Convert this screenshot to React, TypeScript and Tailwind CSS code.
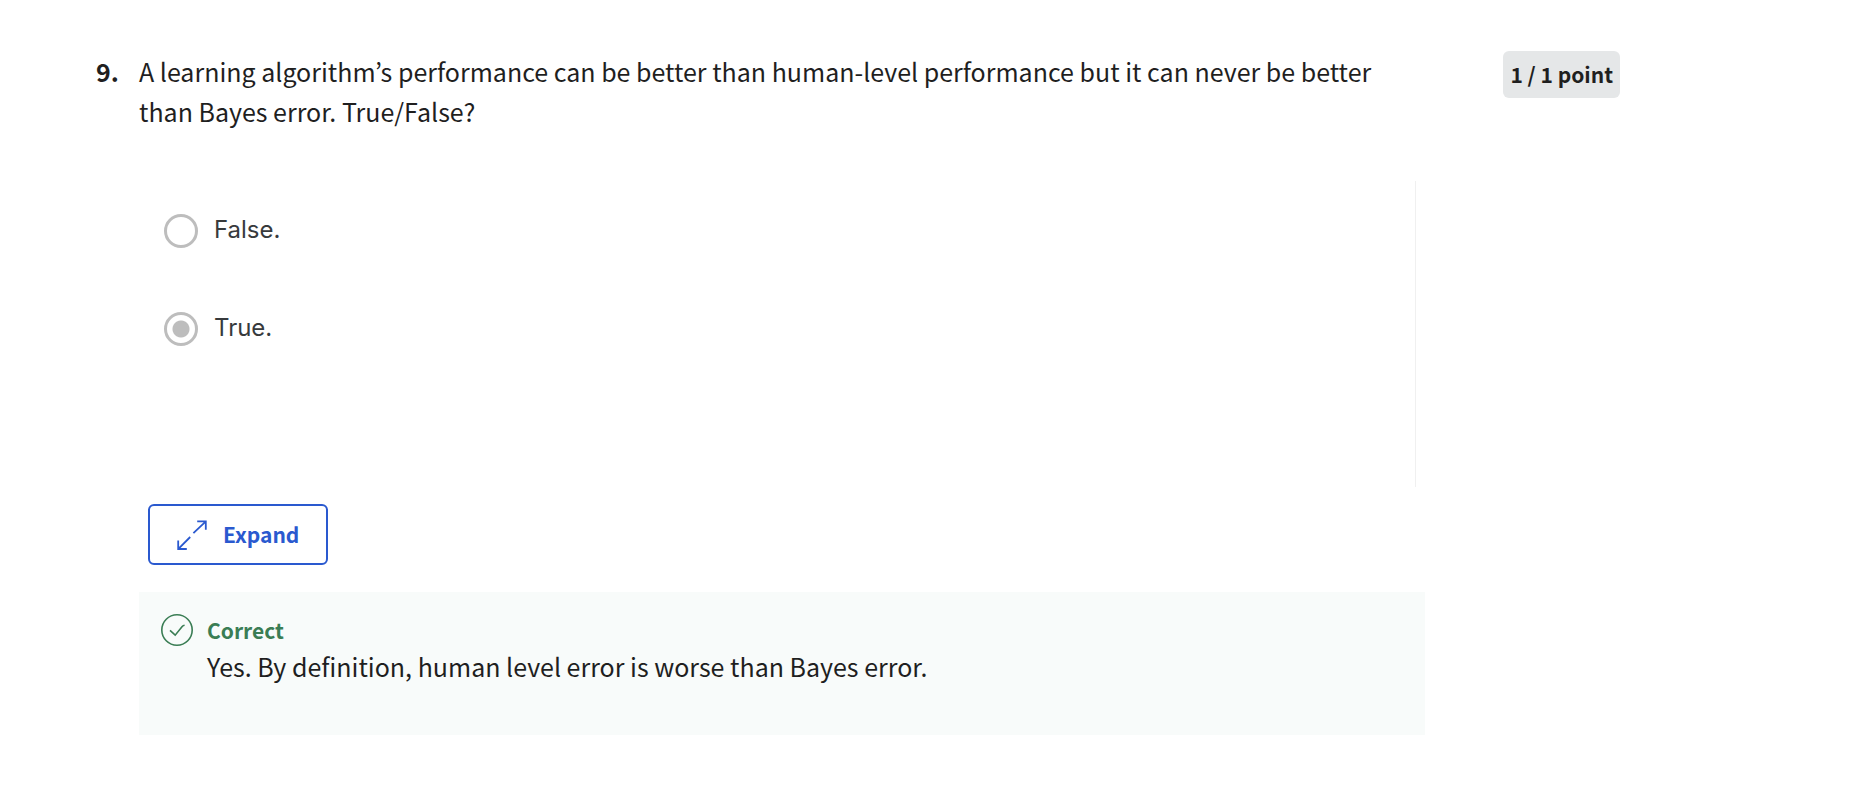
import { useState } from "react";

const choices = ["False.", "True."];

function ExpandIcon() {
  return (
    <svg
      className="size-[30px] shrink-0"
      viewBox="0 0 30 30"
      fill="none"
      stroke="currentColor"
      strokeWidth="1.8"
      aria-hidden="true"
    >
      <path d="M20.2 1.4H28.8V9.8M28.6 1.6L16.4 13.2M9.8 29H1.2V20.4M1.4 28.8L13.2 17" />
    </svg>
  );
}

function CheckCircleIcon() {
  return (
    <svg
      className="size-8 shrink-0"
      viewBox="0 0 32 32"
      fill="none"
      stroke="currentColor"
      strokeWidth="1.6"
      aria-hidden="true"
    >
      <circle cx="16" cy="16" r="15.2" />
      <path d="M9 16.4L14.2 21.2L21.2 12.6C22 11.6 22.6 11.3 23.6 11.2" />
    </svg>
  );
}

export default function App() {
  const [expanded, setExpanded] = useState(false);

  return (
    <main className="flex min-h-screen items-start bg-white pt-[51px] pr-64 pb-16 pl-24 font-['Noto_Sans_CJK_KR','Noto_Sans',sans-serif] text-[#1f1f1f]">
      <h2 className="w-[43px] shrink-0 text-[25px] leading-10 font-bold">9.</h2>

      <section className="min-w-0 flex-1">
        <p className="text-[25px] leading-10">
          A learning algorithm’s performance can be better than human-level
          performance but it can never be better than Bayes error. True/False?
        </p>

        <fieldset
          aria-label="Answer"
          className="mt-[50px] mr-[9px] flex h-[306px] flex-col gap-16 border-r border-[#f0f0f0] pt-[33px] pl-[25px] font-['Inter','Noto_Sans',sans-serif] text-2xl text-[#373a3c]"
        >
          {choices.map((choice) => (
            <label key={choice} className="flex h-[34px] items-start gap-4 leading-8">
              <input
                type="radio"
                name="answer"
                value={choice}
                defaultChecked={choice === "True."}
                disabled
                className="size-[34px] shrink-0 appearance-none rounded-full border-3 border-[#bdbdbd] bg-white checked:bg-[radial-gradient(circle,#bdbdbd_8px,transparent_9px)]"
              />
              <span className="leading-[31px]">{choice}</span>
            </label>
          ))}
        </fieldset>

        <button
          type="button"
          aria-expanded={expanded}
          onClick={() => setExpanded(!expanded)}
          className="mt-[17px] ml-[9px] flex h-[61px] items-center gap-4 rounded-md border-2 border-[#2a59cf] px-[27px] text-[21px] font-bold text-[#2a59cf]"
        >
          <ExpandIcon />
          Expand
        </button>

        <div className="mt-[27px] flex items-start gap-[14px] bg-[#f8fbfa] px-[22px] pt-[22px] pb-[49px]">
          <span className="text-[#3a7d54]">
            <CheckCircleIcon />
          </span>
          <div>
            <h3 className="text-[21px] leading-8 font-bold text-[#3a7d54]">Correct</h3>
            <p className="text-[25px] leading-10">
              Yes. By definition, human level error is worse than Bayes error.
            </p>
          </div>
        </div>
      </section>

      <p className="ml-[78px] shrink-0 rounded-md bg-[#e5e7e8] px-[7px] text-[21px] leading-[47px] font-bold">
        1 / 1 point
      </p>
    </main>
  );
}
